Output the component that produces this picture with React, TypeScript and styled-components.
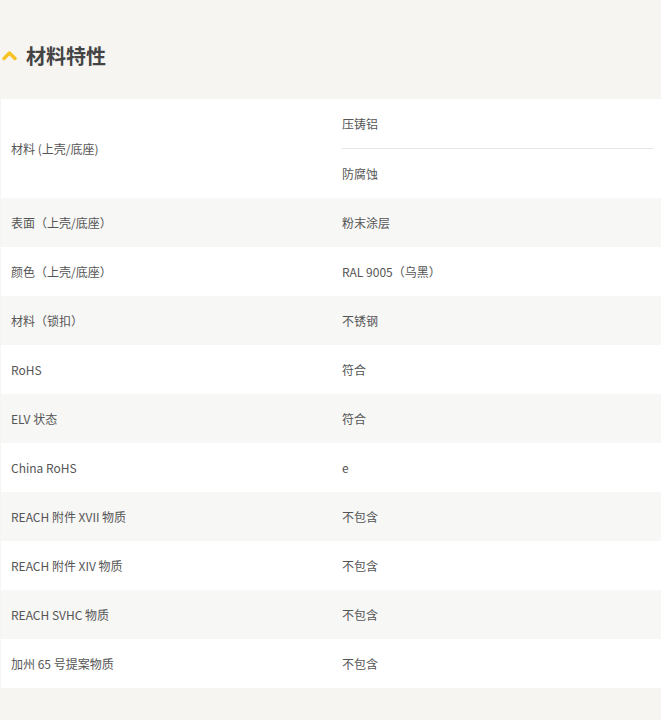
import React from "react";
import styled, { createGlobalStyle } from "styled-components";

const Global = createGlobalStyle`
  html, body { margin: 0; padding: 0; background: #f6f5f2; }
  body { font-family: "Noto Sans CJK SC", "Noto Sans", sans-serif; }
`;

const Page = styled.div`
  width: 661px;
  min-height: 720px;
  background: #f6f5f2;
`;

const Header = styled.div`
  display: flex;
  align-items: center;
  gap: 9px;
  height: 99px;
  padding: 12px 0 0 2px;
  box-sizing: border-box;
`;

const Title = styled.h2`
  margin: 0;
  font-size: 20px;
  font-weight: 700;
  color: #444;
  line-height: 1;
`;

const Table = styled.div`
  margin-left: 1px;
  display: flex;
  flex-direction: column;
`;

const Row = styled.div<{ $alt?: boolean }>`
  display: grid;
  grid-template-columns: 330px 1fr;
  background: ${(p) => (p.$alt ? "#f7f7f5" : "#ffffff")};
  min-height: 49px;
`;

const Label = styled.div`
  display: flex;
  align-items: center;
  padding-left: 10px;
  font-size: 12px;
  color: #555;
`;

const Value = styled.div`
  display: flex;
  flex-direction: column;
  padding: 0 7px 0 11px;
  font-size: 12px;
  color: #555;
`;

const ValueLine = styled.div<{ $divider?: boolean }>`
  display: flex;
  align-items: center;
  height: ${(p) => (p.$divider ? "50px" : "49px")};
  box-sizing: border-box;
  border-top: ${(p) => (p.$divider ? "1px solid #e6e6e6" : "none")};
`;

const Chevron = () => (
  <svg width="15" height="11" viewBox="0 0 15 11">
    <path d="M2 8.5 L7.5 3 L13 8.5" fill="none" stroke="#f7c224" strokeWidth="3.4" strokeLinecap="round" strokeLinejoin="round" />
  </svg>
);

const rows: [string, string[]][] = [
  ["材料 (上壳/底座)", ["压铸铝", "防腐蚀"]],
  ["表面（上壳/底座）", ["粉末涂层"]],
  ["颜色（上壳/底座）", ["RAL 9005（乌黑）"]],
  ["材料（锁扣）", ["不锈钢"]],
  ["RoHS", ["符合"]],
  ["ELV 状态", ["符合"]],
  ["China RoHS", ["e"]],
  ["REACH 附件 XVII 物质", ["不包含"]],
  ["REACH 附件 XIV 物质", ["不包含"]],
  ["REACH SVHC 物质", ["不包含"]],
  ["加州 65 号提案物质", ["不包含"]],
];

export default function App() {
  return (
    <Page>
      <Global />
      <Header>
        <Chevron />
        <Title>材料特性</Title>
      </Header>
      <Table>
        {rows.map(([label, values], i) => (
          <Row key={label} $alt={i % 2 === 1}>
            <Label>{label}</Label>
            <Value>
              {values.map((v, j) => (
                <ValueLine key={v} $divider={j > 0}>{v}</ValueLine>
              ))}
            </Value>
          </Row>
        ))}
      </Table>
    </Page>
  );
}
